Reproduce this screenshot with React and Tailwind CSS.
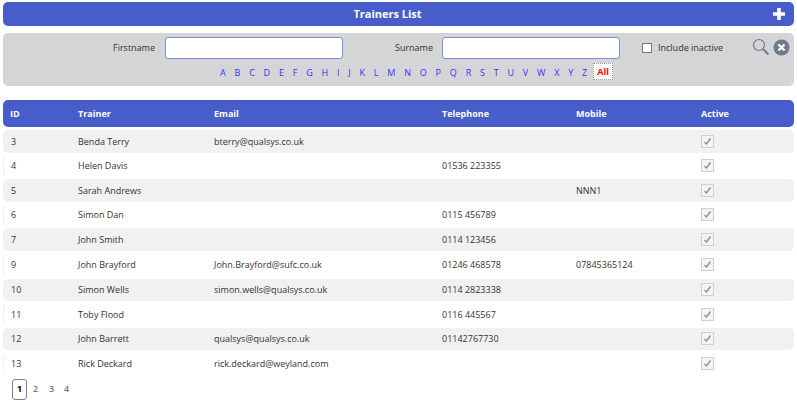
const letters = "ABCDEFGHIJKLMNOPQRSTUVWXYZ".split("");

const rows = [
  { id: 3, name: "Benda Terry", email: "bterry@qualsys.co.uk", tel: "", mobile: "" },
  { id: 4, name: "Helen Davis", email: "", tel: "01536 223355", mobile: "" },
  { id: 5, name: "Sarah Andrews", email: "", tel: "", mobile: "NNN1" },
  { id: 6, name: "Simon Dan", email: "", tel: "0115 456789", mobile: "" },
  { id: 7, name: "John Smith", email: "", tel: "0114 123456", mobile: "" },
  { id: 9, name: "John Brayford", email: "John.Brayford@sufc.co.uk", tel: "01246 468578", mobile: "07845365124", tall: true },
  { id: 10, name: "Simon Wells", email: "simon.wells@qualsys.co.uk", tel: "0114 2823338", mobile: "" },
  { id: 11, name: "Toby Flood", email: "", tel: "0116 445567", mobile: "" },
  { id: 12, name: "John Barrett", email: "qualsys@qualsys.co.uk", tel: "01142767730", mobile: "" },
  { id: 13, name: "Rick Deckard", email: "rick.deckard@weyland.com", tel: "", mobile: "" },
];

const Check = () => (
  <span className="flex h-[13px] w-[13px] items-center justify-center border border-[#cfcfcf] bg-[#f4f4f4]">
    <svg width="9" height="9" viewBox="0 0 9 9" fill="none">
      <path d="M1.5 5 L3.5 7 L7.5 1.5" stroke="#8f8f8f" strokeWidth="1.4" />
    </svg>
  </span>
);

export default function App() {
  return (
    <div className="h-[400px] w-[797px] overflow-hidden bg-white px-[3px] pt-[2px] font-['Open_Sans',sans-serif] text-[9px] text-[#333]">
      <div className="relative flex h-6 items-center justify-center rounded-[5px] bg-[#475dc9] pr-[22px] text-[11px] font-bold text-white">
        Trainers List
        <svg className="absolute right-[8px] top-[5px]" width="14" height="14" viewBox="0 0 14 14" fill="#fff">
          <path d="M5.2 1h3.600v4.200H13v3.600H8.800V13H5.200V8.800H1V5.200h4.200z" />
        </svg>
      </div>

      <div className="mt-[7px] h-[53px] rounded-[5px] bg-[#d5d5d7] pt-1">
        <div className="flex h-[22px] items-center">
          <span className="ml-[108px] w-[44px] text-right">Firstname</span>
          <input className="ml-[10px] h-[22px] w-[178px] rounded-[3px] border border-[#7d8fe0] bg-white" />
          <span className="ml-[49px] w-[41px] text-right">Surname</span>
          <input className="ml-[9px] h-[22px] w-[178px] rounded-[3px] border border-[#7d8fe0] bg-white" />
          <span className="ml-[22px] h-[10px] w-[10px] border border-[#777] bg-white" />
          <span className="ml-[6px]">Include inactive</span>
          <svg className="ml-[29px] -mt-[2px]" width="18" height="18" viewBox="0 0 18 18" fill="none">
            <circle cx="7" cy="7" r="5.5" stroke="#6f7a8c" strokeWidth="1.200" />
            <path d="M11 11 L16.500 16.500" stroke="#6f7a8c" strokeWidth="1.800" />
          </svg>
          <svg className="ml-[3px] -mt-[2px]" width="17" height="17" viewBox="0 0 17 17">
            <circle cx="8.500" cy="8.500" r="8" fill="#6f7a8c" />
            <path d="M5.500 5.500 L11.500 11.500 M11.500 5.500 L5.500 11.500" stroke="#fff" strokeWidth="2.400" />
          </svg>
        </div>
        <div className="mt-[5px] flex h-[18px] items-center pl-[217px] text-[#3333ff]">
          <div className="flex gap-[8.800px]">
            {letters.map((l) => (
              <span key={l}>{l}</span>
            ))}
          </div>
          <span className="ml-[6px] -mt-[3px] flex h-[17px] w-[20px] items-center justify-center border border-dotted border-[#999] bg-white pt-[1px] font-bold text-[#ff0000]">
            All
          </span>
        </div>
      </div>

      <div className="mt-[14px] flex h-[27px] items-center rounded-[5px] bg-[#475dc9] font-bold text-white">
        <span className="w-[75px] pl-[7px]">ID</span>
        <span className="w-[136px]">Trainer</span>
        <span className="w-[228px]">Email</span>
        <span className="w-[134px]">Telephone</span>
        <span className="w-[125px]">Mobile</span>
        <span>Active</span>
      </div>

      <div className="mt-[3px] flex flex-col gap-[2px]">
        {rows.map((r, i) => (
          <div
            key={r.id}
            className={`flex items-center rounded-[5px] ${r.tall ? "h-[24px]" : "h-[22.500px]"} ${i % 2 === 0 ? "bg-[#f1f1f1]" : "border-l border-[#eeeeee] bg-white"}`}
          >
            <span className={i % 2 === 0 ? "w-[75px] pl-[8px]" : "w-[74px] pl-[7px]"}>{r.id}</span>
            <span className="w-[136px]">{r.name}</span>
            <span className="w-[228px]">{r.email}</span>
            <span className="w-[134px]">{r.tel}</span>
            <span className="w-[125px]">{r.mobile}</span>
            <Check />
          </div>
        ))}
      </div>

      <div className="mt-[4px] flex items-center pl-[9px]">
        <span className="flex h-[21px] w-[15px] items-center justify-center rounded-[3px] border border-[#7a8296] font-bold text-black">
          1
        </span>
        <span className="ml-[6px] w-[16px] font-semibold text-[#777]">2</span>
        <span className="w-[15px] font-semibold text-[#777]">3</span>
        <span className="font-semibold text-[#777]">4</span>
      </div>
    </div>
  );
}
